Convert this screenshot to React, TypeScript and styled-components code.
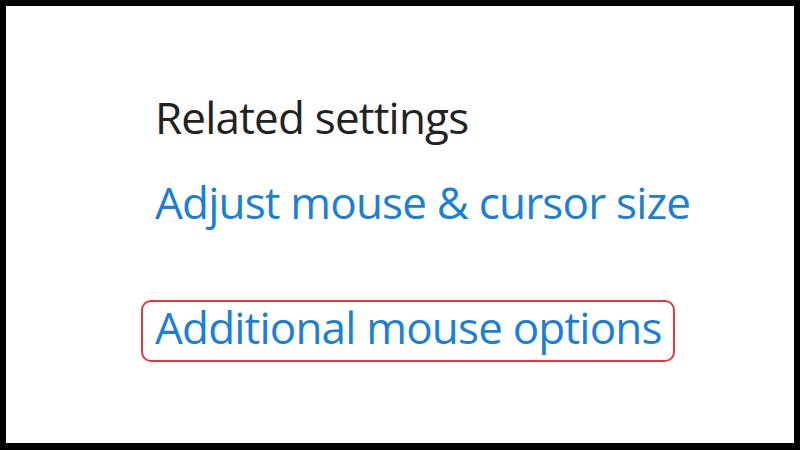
import React from 'react';
import styled, { createGlobalStyle } from 'styled-components';

const GlobalStyle = createGlobalStyle`
  html, body {
    margin: 0;
    padding: 0;
    background: #000;
  }
`;

const Frame = styled.div`
  box-sizing: border-box;
  width: 800px;
  height: 450px;
  border: solid #000;
  border-width: 6px 6px 7px 6px;
  background: #fff;
  padding: 89px 0 0 149px;
  font-family: 'Open Sans', 'Noto Sans', sans-serif;
`;

const Section = styled.section`
  display: flex;
  flex-direction: column;
  align-items: flex-start;
`;

const Title = styled.div`
  font-size: 44px;
  line-height: 44px;
  color: #222;
  letter-spacing: -0.8px;
`;

const SettingLink = styled.a<{ $highlighted?: boolean }>`
  display: block;
  font-size: 44px;
  line-height: 44px;
  color: #1a7fd6;
  text-decoration: none;
  letter-spacing: -0.8px;
  white-space: nowrap;
  margin-top: ${p => (p.$highlighted ? '76px' : '41px')};
  ${p =>
    p.$highlighted &&
    `
    margin-left: -14px;
    padding: 3px 11px 11px 12px;
    border: 2px solid #e8383d;
    border-radius: 10px;
  `}
`;

export default function App() {
  return (
    <>
      <GlobalStyle />
      <Frame>
        <Section>
          <Title>Related settings</Title>
          <SettingLink href="#">Adjust mouse &amp; cursor size</SettingLink>
          <SettingLink href="#" $highlighted>
            Additional mouse options
          </SettingLink>
        </Section>
      </Frame>
    </>
  );
}
